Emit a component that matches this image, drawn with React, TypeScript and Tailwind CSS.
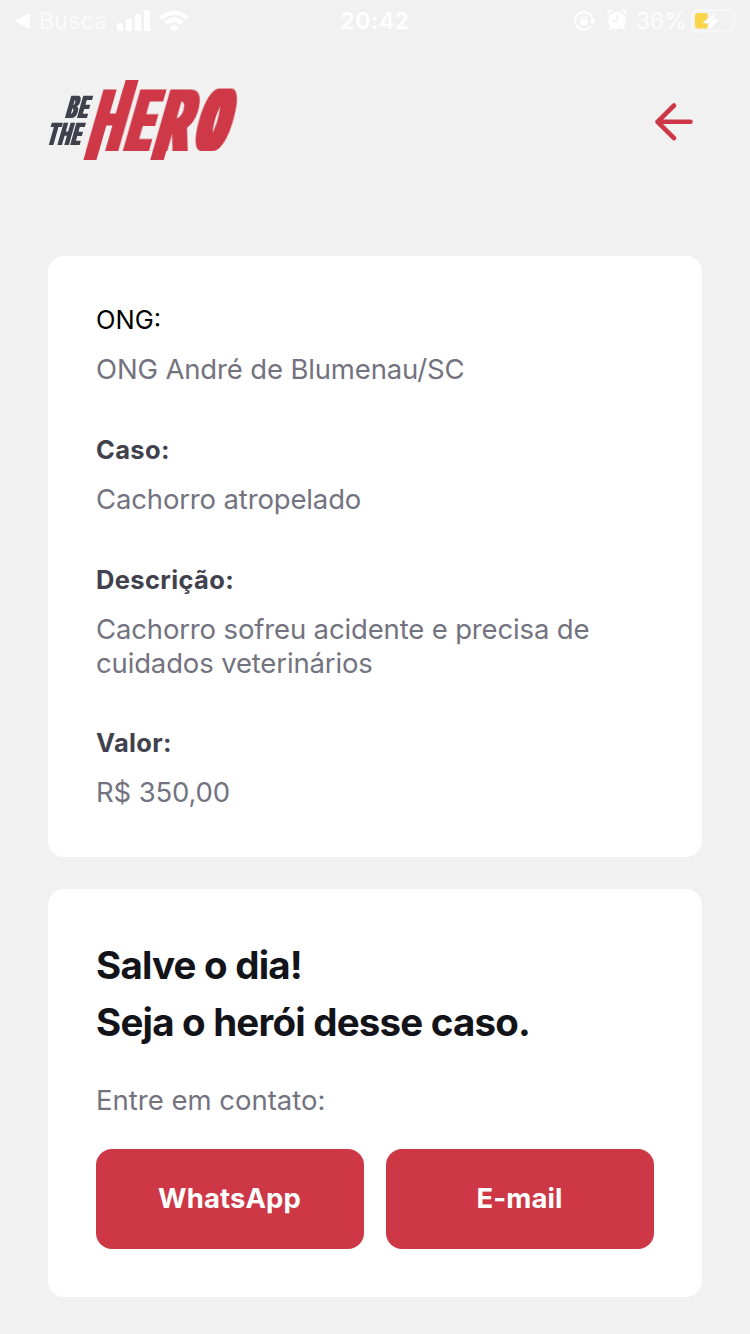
const letters = [
  { ch: "H", x: 86.5, s: 0.49 },
  { ch: "E", x: 123.4, s: 0.47 },
  { ch: "R", x: 153, s: 0.58 },
];

function Logo() {
  return (
    <svg className="overflow-visible" width="192" height="82" viewBox="47 79 192 82" role="img" aria-label="Be The Hero">
      <defs>
        <filter id="widen" x="-10%" y="-10%" width="120%" height="120%">
          <feMorphology operator="dilate" radius="3 0" />
        </filter>
        <filter id="widen-round" x="-60%" y="-10%" width="220%" height="120%">
          <feMorphology operator="dilate" radius="6 1" />
        </filter>
        <filter id="widen-small" x="-10%" y="-10%" width="120%" height="120%">
          <feMorphology operator="dilate" radius="1 0" />
        </filter>
      </defs>
      <g transform="translate(0 151) skewX(-16)" fill="#ce3746" fontFamily="Inter, sans-serif" fontWeight="800" fontSize="85">
        <g filter="url(#widen)">
          {letters.map((l) => (
            <text key={l.ch} x="0" y="0" transform={`translate(${l.x} 0) scale(${l.s} 1)`}>
              {l.ch}
            </text>
          ))}
        </g>
        <g filter="url(#widen-round)" fontWeight="500" fontSize="80">
          <text transform="translate(194.500 -1.500) scale(0.42 1)">O</text>
        </g>
        <rect x="86" y="-1" width="13" height="10" />
        <rect x="105.300" y="-71" width="13" height="10" />
        <rect x="152.800" y="-1" width="13.500" height="10" />
      </g>
      <g fill="#41414d" fontFamily="Inter, sans-serif" fontWeight="800" fontSize="30.500" letterSpacing="3" filter="url(#widen-small)">
        <text transform="translate(65 117.500) skewX(-16) scale(0.52 1)">BE</text>
        <text transform="translate(46 144.500) skewX(-16) scale(0.49 1)">THE</text>
      </g>
    </svg>
  );
}

function StatusBar() {
  return (
    <div className="grid h-10 grid-cols-3 items-center text-[23px] leading-10 text-white">
      <div className="flex items-center pl-[14px]">
        <svg width="16" height="16" viewBox="0 0 16 16" fill="#fff"><path d="M1.5 7.2 14 .8Q16 .3 16 2v12q0 1.7-2 1.2L1.5 8.8Q.2 8 1.5 7.2Z" /></svg>
        <span className="ml-[9px] w-[69px] tracking-[0.3px] opacity-70">Busca</span>
        <svg className="ml-[9px]" width="34" height="21" viewBox="0 0 34 21" fill="#fff">
          <rect x="0" y="13" width="6" height="8" rx="1.5" />
          <rect x="9" y="9" width="6" height="12" rx="1.5" />
          <rect x="18" y="4" width="6" height="17" rx="1.5" />
          <rect x="27" y="0" width="6" height="21" rx="1.5" />
        </svg>
        <svg className="ml-2" width="30" height="22" viewBox="0 0 30 22" fill="none" stroke="#fff" strokeWidth="4.4">
          <path d="M2 8.2A18.5 18.5 0 0 1 28 8.2" />
          <path d="M6.8 13.2A11.6 11.6 0 0 1 23.2 13.2" />
          <path d="M10.3 17.2A6.6 6.6 0 0 1 19.7 17.2L15 22Z" fill="#fff" stroke="none" />
        </svg>
      </div>
      <div className="pt-px text-center font-semibold tracking-[0.6px]">20:42</div>
      <div className="flex items-center justify-end pr-[12px]">
        <svg width="22" height="20" viewBox="0 0 22 20" fill="none" stroke="#fff" strokeWidth="1.8">
          <path d="M16.8 15.5A8.8 8.8 0 1 1 18.6 9" />
          <path d="M15 9h7l-3.5 4.5Z" fill="#fff" stroke="none" />
          <rect x="6.4" y="8.6" width="7" height="6" rx="1" fill="#fff" stroke="none" />
          <path d="M7.8 9V7a2.1 2.1 0 0 1 4.2 0v2" strokeWidth="1.4" />
        </svg>
        <svg className="mb-[2px] ml-[11px]" width="20" height="22" viewBox="0 0 20 22">
          <circle cx="10" cy="11.5" r="8.8" fill="#fff" />
          <path d="M.8 5.4A3.5 3.5 0 0 1 6 1.2ZM19.2 5.4A3.5 3.5 0 0 0 14 1.2ZM4 17l-2.5 3 1.5 1 3-3ZM16 17l2.5 3-1.5 1-3-3Z" fill="#fff" />
          <path d="M10 6v6H5" fill="none" stroke="#f0f0f0" strokeWidth="1.4" />
        </svg>
        <span className="ml-[9px] w-[50px] pt-px tracking-[-0.1px] opacity-90">36%</span>
        <svg className="ml-[5px]" width="47" height="24" viewBox="0 0 47 24" fill="none">
          <rect x="1" y="1" width="41.500" height="21.500" rx="6" stroke="#f7f7f7" strokeWidth="2" />
          <path d="M44.500 8.500q3 3.300 0 6.600Z" fill="#f8f8f8" />
          <path d="M7 4h9.500v15.500H7q-3 0-3-3V7q0-3 3-3Z" fill="#f9d648" />
          <path d="M26 1.500 12 14h7L16.500 22.500 29.500 10h-7Z" fill="#fff" stroke="#f1f1f1" strokeWidth="0.800" />
        </svg>
      </div>
    </div>
  );
}

function Field({ label, value, plain = false }: { label: string; value: string; plain?: boolean }) {
  return (
    <div className="last:-mt-px">
      <dt className={plain ? "text-[25.5px] leading-8 text-black" : "text-[25.5px] font-bold leading-8 tracking-[0.35px] text-[#41414d]"}>{label}</dt>
      <dd className="mt-4 text-[27.5px] leading-[34px] tracking-[-0.15px] text-[#737380]">{value}</dd>
    </div>
  );
}

export default function App() {
  return (
    <div className="h-[1334px] w-[750px] overflow-hidden bg-[#f1f1f1] font-['Inter',sans-serif]">
      <StatusBar />
      <header className="flex h-[216px] items-start justify-between pl-[47px] pr-[55px] pt-[39px]">
        <Logo />
        <button aria-label="Voltar" className="mt-[22px]">
          <svg width="42" height="42" viewBox="0 0 42 42" fill="none" stroke="#ce3746" strokeWidth="4.6" strokeLinecap="round" strokeLinejoin="round">
            <path d="M37.500 20.800H4.500M21 4.500 4.500 20.800 21 37.200" />
          </svg>
        </button>
      </header>
      <main className="flex flex-col gap-8 px-12">
        <dl className="flex h-[601px] flex-col gap-12 rounded-2xl bg-white p-12">
          <Field plain label="ONG:" value="ONG André de Blumenau/SC" />
          <Field label="Caso:" value="Cachorro atropelado" />
          <Field label="Descrição:" value="Cachorro sofreu acidente e precisa de cuidados veterinários" />
          <Field label="Valor:" value="R$ 350,00" />
        </dl>
        <section className="h-[408px] rounded-2xl bg-white p-12">
          <h1 className="text-[38.5px] font-bold leading-[57px] tracking-[-0.8px] text-[#13131a]">
            Salve o dia!
            <br />
            Seja o herói desse caso.
          </h1>
          <p className="mt-8 text-[27.5px] leading-[34px] text-[#737380]">Entre em contato:</p>
          <div className="mt-8 grid grid-cols-2 gap-[22px]">
            <button className="h-[100px] rounded-2xl bg-[#ce3746] pr-px text-[27.5px] font-bold tracking-[0.1px] text-white">WhatsApp</button>
            <button className="h-[100px] rounded-2xl bg-[#ce3746] pr-px text-[27.5px] font-bold tracking-[0.1px] text-white">E-mail</button>
          </div>
        </section>
      </main>
    </div>
  );
}
